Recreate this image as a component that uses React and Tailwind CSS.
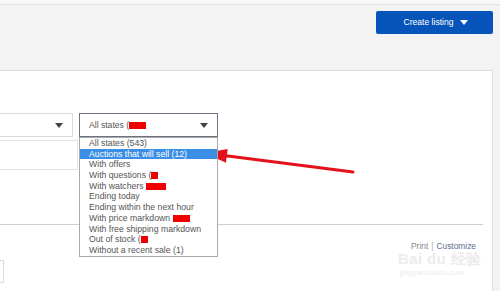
import React from 'react'

const OPTIONS = [
  { label: 'All states (543)' },
  { label: 'Auctions that will sell (12)', active: true },
  { label: 'With offers' },
  { label: 'With questions (', redact: 7 },
  { label: 'With watchers ', redact: 20 },
  { label: 'Ending today' },
  { label: 'Ending within the next hour' },
  { label: 'With price markdown ', redact: 17 },
  { label: 'With free shipping markdown' },
  { label: 'Out of stock (', redact: 7 },
  { label: 'Without a recent sale (1)' },
]

function Caret({ className = '' }) {
  return (
    <svg width="8" height="5" viewBox="0 0 8 5" className={className}>
      <path d="M0 0 H8 L4 5 Z" fill="currentColor" />
    </svg>
  )
}

function Redact({ w }) {
  return <span className="inline-block h-[7px] bg-[#ee0000] align-[-1px]" style={{ width: w }} />
}

export default function App() {
  return (
    <div className="relative w-[500px] h-[291px] overflow-hidden bg-[#f3f3f3] font-['Liberation_Sans',Arial,sans-serif]">
      {/* top strip */}
      <div className="h-[5px] bg-[#f8f8f8] border-b border-[#e4e4e4]" />

      {/* header */}
      <div className="h-[65px] flex justify-end pr-[7px] pt-[6px]">
        <button className="w-[117px] h-[23px] rounded-[2px] bg-[#0654ba] text-white text-[8.6px] flex items-center justify-center gap-[6px] pl-[2px]">
          Create listing
          <Caret className="text-white" />
        </button>
      </div>

      {/* panel */}
      <div className="w-[493px] h-[221px] bg-white border-t border-r border-[#dcdcdc]">
        <div className="pt-[42px] flex gap-[1px]">
          <div className="flex flex-col gap-[3px]">
            <div className="w-[73px] h-[24px] border border-l-0 border-[#dadada] flex items-center justify-end pr-[9px] text-[#444]">
              <Caret />
            </div>
            <div className="w-[78px] h-[30px] border border-l-0 border-[#e3e3e3]" />
          </div>

          <div className="relative w-[139px] h-[24px] border border-[#6a7480] flex items-center justify-between pl-[9px] pr-[9px] text-[8.6px] text-[#555]">
            <span>
              All states (<Redact w={17} />
            </span>
            <Caret className="text-[#444]" />

            {/* dropdown list */}
            <div className="absolute top-[23px] left-[-1px] w-[139px] bg-white border border-[#a9a9a9] z-10">
              {OPTIONS.map((o, i) => (
                <div
                  key={i}
                  className={`h-[10.7px] leading-[10.7px] pl-[9px] text-[8.7px] whitespace-nowrap ${o.active ? 'bg-[#3a8ee6] text-white' : 'text-[#555]'}`}
                >
                  {o.label}
                  {o.redact && <Redact w={o.redact} />}
                </div>
              ))}
            </div>
          </div>
        </div>

        <div className="mt-[54px] w-[483px] border-t border-[#cfcfcf]" />

        <div className="mt-[15px] flex justify-end pr-[16px] text-[8.4px] leading-[12px]">
          <span className="text-[#888]">Print</span>
          <span className="text-[#aaa] mx-[3px]">|</span>
          <span className="text-[#56708e]">Customize</span>
        </div>

        <div className="mt-[8px] w-[4px] h-[23px] border border-l-0 border-[#dadada]" />
      </div>

      {/* watermark */}
      <div className="absolute left-[398px] top-[251px] text-[#ececec] leading-none pointer-events-none">
        <div className="text-[15px] font-bold tracking-wide">Bai du 经验</div>
        <div className="text-[8px] mt-[3px] pl-[2px]">jingyan.baidu.com</div>
      </div>

      {/* annotation arrow */}
      <svg className="absolute left-0 top-0 pointer-events-none" width="500" height="291">
        <line x1="353" y1="172" x2="224" y2="155.6" stroke="#e3121a" strokeWidth="3" strokeLinecap="round" />
        <polygon points="205,153 227.7,148.9 225.9,162.7" fill="#e3121a" />
      </svg>
    </div>
  )
}
